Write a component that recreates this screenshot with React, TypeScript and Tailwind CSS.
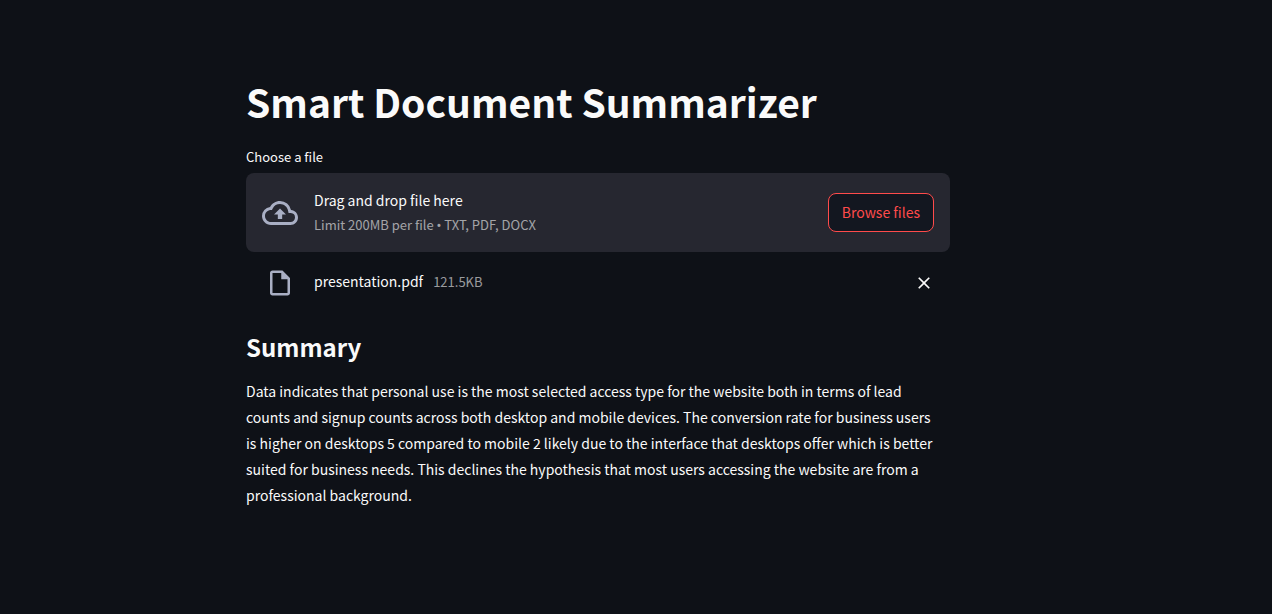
import { MdClose, MdOutlineCloudUpload, MdOutlineInsertDriveFile } from "react-icons/md";

function UploadZone() {
  return (
    <section className="flex flex-col">
      <label htmlFor="browse" className="mb-1 text-[13px] leading-6">
        Choose a file
      </label>
      <div className="flex items-center rounded-lg bg-[#262730] px-4 py-[15px]">
        <MdOutlineCloudUpload className="mr-4 size-9 shrink-0 text-[#a9afc4]" aria-hidden="true" />
        <div className="mr-auto flex flex-col">
          <span className="text-[14px] leading-[25px]">Drag and drop file here</span>
          <span className="text-[13px] leading-6 text-[#fafafa]/60">
            Limit 200MB per file <span className="font-['Noto_Sans',sans-serif]">•</span> TXT, PDF,
            DOCX
          </span>
        </div>
        <button
          id="browse"
          type="button"
          className="rounded-lg border border-[#ff4b4b] bg-[#131720] px-[13px] py-[6px] text-[14px] leading-[25px] text-[#ff4b4b]"
        >
          Browse files
        </button>
      </div>
    </section>
  );
}

function UploadedFile({ name, size }: { name: string; size: string }) {
  return (
    <div className="flex items-center px-4 pt-4">
      <div className="mr-4 flex w-9 shrink-0 justify-center">
        <MdOutlineInsertDriveFile className="size-[30px] text-[#a9afc4]" aria-hidden="true" />
      </div>
      <div className="mr-auto flex items-baseline gap-[10px] pb-1 leading-6">
        <span className="text-[14px]">{name}</span>
        <span className="text-[13px] text-[#fafafa]/60">{size}</span>
      </div>
      <button type="button" aria-label={`Remove ${name}`}>
        <MdClose className="size-5" />
      </button>
    </div>
  );
}

export default function App() {
  return (
    <div className="min-h-screen bg-[#0e1117] pr-[76px] font-['Noto_Sans_CJK_SC','Noto_Sans_CJK_JP',sans-serif] text-[#fafafa]">
      <main className="mx-auto max-w-[736px] px-4 pt-[75px]">
        <h1 className="mb-[18px] text-[39px] leading-[52px] font-bold">
          Smart Document Summarizer
        </h1>
        <UploadZone />
        <UploadedFile name="presentation.pdf" size="121.5KB" />
        <h2 className="mt-8 mb-[14px] text-[24px] leading-[34px] font-bold">Summary</h2>
        <p className="pr-3 text-[14px] leading-[26px]">
          Data indicates that personal use is the most selected access type for the website both in
          terms of lead counts and signup counts across both desktop and mobile devices. The
          conversion rate for business users is higher on desktops 5 compared to mobile 2 likely due
          to the interface that desktops offer which is better suited for business needs. This
          declines the hypothesis that most users accessing the website are from a professional
          background.
        </p>
      </main>
    </div>
  );
}
